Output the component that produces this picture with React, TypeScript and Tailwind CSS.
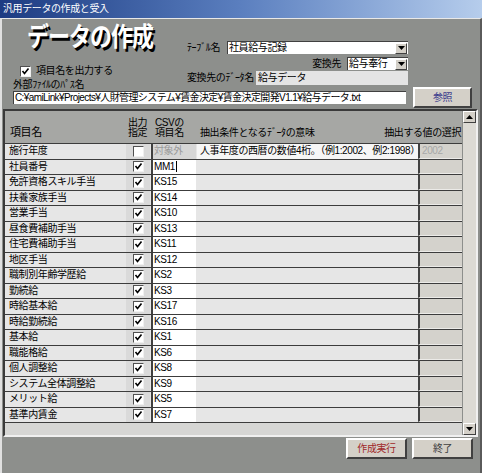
import React from "react";

interface Row {
  name: string;
  csv: string;
  checked: boolean;
  meaning?: string;
  value?: string;
}

const rows: Row[] = [
  { name: "施行年度", csv: "対象外", checked: false, meaning: "人事年度の西暦の数値4桁。（例1:2002、例2:1998）", value: "2002" },
  { name: "社員番号", csv: "MM1", checked: true },
  { name: "免許資格スキル手当", csv: "KS15", checked: true },
  { name: "扶養家族手当", csv: "KS14", checked: true },
  { name: "営業手当", csv: "KS10", checked: true },
  { name: "昼食費補助手当", csv: "KS13", checked: true },
  { name: "住宅費補助手当", csv: "KS11", checked: true },
  { name: "地区手当", csv: "KS12", checked: true },
  { name: "職制別年齢学歴給", csv: "KS2", checked: true },
  { name: "勤続給", csv: "KS3", checked: true },
  { name: "時給基本給", csv: "KS17", checked: true },
  { name: "時給勤続給", csv: "KS16", checked: true },
  { name: "基本給", csv: "KS1", checked: true },
  { name: "職能格給", csv: "KS6", checked: true },
  { name: "個人調整給", csv: "KS8", checked: true },
  { name: "システム全体調整給", csv: "KS9", checked: true },
  { name: "メリット給", csv: "KS5", checked: true },
  { name: "基準内賃金", csv: "KS7", checked: true },
];

function CheckBox({ checked }: { checked: boolean }) {
  return (
    <span className="w-[11px] h-[11px] bg-white border-t border-l border-t-[#505050] border-l-[#505050] border-r border-b border-r-[#f0f0f0] border-b-[#f0f0f0] flex items-center justify-center">
      {checked && (
        <svg viewBox="0 0 9 9" className="w-[9px] h-[9px]">
          <polyline points="1.5,4 3.5,6.5 7.5,1.5" fill="none" stroke="#000" strokeWidth="1.6" />
        </svg>
      )}
    </span>
  );
}

function Arrow({ down }: { down?: boolean }) {
  return (
    <svg viewBox="0 0 7 4" className="w-[7px] h-[4px]">
      <polygon points={down ? "0,0 7,0 3.5,4" : "0,4 7,4 3.5,0"} fill="#000" />
    </svg>
  );
}

function DropButton() {
  return (
    <span className="w-[12px] h-[11px] mr-[1px] shrink-0 bg-[#d4d0c8] border-t border-l border-white border-r border-b border-r-[#404040] border-b-[#404040] flex items-center justify-center">
      <Arrow down />
    </span>
  );
}

function WinButton({ label, color }: { label: string; color: string }) {
  return (
    <button
      className={`h-[21px] bg-[#d4d0c8] border-t-2 border-l-2 border-t-white border-l-white border-r-2 border-b-2 border-r-[#404040] border-b-[#404040] text-[10px] ${color}`}
    >
      {label}
    </button>
  );
}

export default function App() {
  return (
    <div className="w-[482px] h-[473px] flex flex-col bg-[#8d8f8c] overflow-hidden text-[10px] leading-none tracking-[-0.4px] text-black whitespace-nowrap font-['Liberation_Sans','Noto_Sans_CJK_JP',sans-serif]">
      {/* Title bar */}
      <div className="h-[18px] shrink-0 flex items-center px-[3px] bg-linear-to-r from-[#1d3b82] via-[#5b7fbf] to-[#b6cdec] text-white text-[10px]">
        汎用データの作成と受入
      </div>

      <div className="flex-1 flex flex-col border-t border-l-[2px] border-t-[#e8e8e8] border-l-[#e0e0e0] border-r-[2px] border-r-[#5a5a5a]">
        {/* Header form */}
        <div className="flex h-[71px]">
          <div className="w-[185px] flex flex-col">
            <div className="h-[45px] pl-[25px] pt-[8px]">
              <span className="inline-block text-[22px] font-bold text-white tracking-[-1px] origin-left scale-y-120 [text-shadow:2px_2px_0_#000]">
                データの作成
              </span>
            </div>
            <div className="flex items-center gap-[5px] pl-[18px] h-[14px]">
              <CheckBox checked />
              <span>項目名を出力する</span>
            </div>
            <div className="pl-[11px] pt-[2px]">外部ﾌｧｲﾙのﾊﾟｽ名</div>
          </div>
          <div className="flex flex-col pt-[22px] w-[221px]">
            <div className="flex items-center h-[13px]">
              <span className="w-[40px]">ﾃｰﾌﾞﾙ名</span>
              <div className="flex-1 h-[13px] bg-white border-t border-l border-[#404040] flex items-center justify-between pl-[1px]">
                <span>社員給与記録</span>
                <DropButton />
              </div>
            </div>
            <div className="flex items-center justify-end h-[13px] mt-[3px]">
              <span className="mr-[6px]">変換先</span>
              <div className="w-[61px] h-[13px] bg-white border-t border-l border-[#404040] flex items-center justify-between pl-[1px]">
                <span>給与奉行</span>
                <DropButton />
              </div>
            </div>
            <div className="flex items-center h-[14px] mt-[1px]">
              <span className="w-[69px]">変換先のﾃﾞｰﾀ名</span>
              <div className="flex-1 h-[14px] bg-[#e4e4e4] flex items-center pl-[2px]">給与データ</div>
            </div>
          </div>
        </div>

        {/* Path row */}
        <div className="flex items-center h-[21px] -mt-[3px] pl-[11px]">
          <div className="w-[393px] h-[13px] bg-white border-t border-l border-[#404040] flex items-center pl-[1px] tracking-[-0.6px]">
            C:¥amiLink¥Projects¥人財管理システム¥賃金決定¥賃金決定開発V1.1¥給与データ.txt
          </div>
          <div className="ml-[7px] w-[59px] flex">
            <WinButton label="参照" color="text-[#3a3a8c] w-full" />
          </div>
        </div>

        {/* Grid panel */}
        <div className="mt-[1px] ml-[1px] mr-[2px] h-[328px] flex border-t-2 border-l-2 border-t-[#3a3a3a] border-l-[#3a3a3a] border-b-2 border-r-2 border-b-[#f0f0f0] border-r-[#f0f0f0]">
          <div className="flex-1 flex flex-col min-w-0">
            <div className="h-[32px] shrink-0 bg-[#a6a7a4] flex items-end pb-[5px]">
              <span className="w-[121px] shrink-0 pl-[5px] text-[11px]">項目名</span>
              <span className="w-[24px] shrink-0 pl-[2px] leading-[10px]">
                出力
                <br />
                指定
              </span>
              <span className="w-[50px] shrink-0 pl-[5px] leading-[10px]">
                CSVの
                <br />
                項目名
              </span>
              <span className="w-[150px] shrink-0">抽出条件となるﾃﾞｰﾀの意味</span>
              <span className="flex-1 text-right pr-[1px]">抽出する値の選択</span>
            </div>
            {rows.map((r, i) => (
              <div key={r.name} className="h-[15.5px] shrink-0 flex border-t border-[#3c3c3c] bg-[#e6e6e6]">
                <div className="w-[121px] pl-[4px] flex items-center">{r.name}</div>
                <div className="w-[24px] bg-[#dadada] flex items-center justify-center">
                  <CheckBox checked={r.checked} />
                </div>
                <div className="w-[47px] pl-[1px]">
                  <div
                    className={`w-[45px] h-full border-l-2 border-[#404040] flex items-center pl-[1px] ${
                      i === 0 ? "bg-[#d6d6d6] text-[#9a9a9a]" : "bg-white"
                    }`}
                  >
                    {r.csv}
                    {i === 1 && <span className="w-[1px] h-[11px] bg-black ml-[1px]" />}
                  </div>
                </div>
                <div className={`w-[221px] flex items-center pl-[3px] ${i === 0 ? "bg-[#f6f6f6]" : ""}`}>
                  {r.meaning}
                </div>
                <div className="flex-1 bg-[#d4d2cc] border-l-2 border-[#404040] border-b border-b-[#ecebe8] flex items-center pl-[2px] text-[#a8a8a8]">
                  {r.value}
                </div>
              </div>
            ))}
            <div className="flex-1 bg-[#d6d6d4] border-t border-[#3c3c3c]" />
          </div>
          <div className="w-[13px] ml-[1px] bg-[#dcdad4] flex flex-col justify-between">
            <div className="h-[12px] bg-[#d4d0c8] border-t border-l border-white border-r border-b border-r-[#404040] border-b-[#404040] flex items-center justify-center">
              <Arrow />
            </div>
            <div className="h-[12px] bg-[#d4d0c8] border-t border-l border-white border-r border-b border-r-[#404040] border-b-[#404040] flex items-center justify-center">
              <Arrow down />
            </div>
          </div>
        </div>

        {/* Footer */}
        <div className="flex justify-end gap-[5px] pr-[7px] pt-[1px]">
          <div className="w-[61px] flex">
            <WinButton label="作成実行" color="text-[#a02828] w-full" />
          </div>
          <div className="w-[61px] flex">
            <WinButton label="終了" color="text-[#404040] w-full" />
          </div>
        </div>
      </div>
    </div>
  );
}
